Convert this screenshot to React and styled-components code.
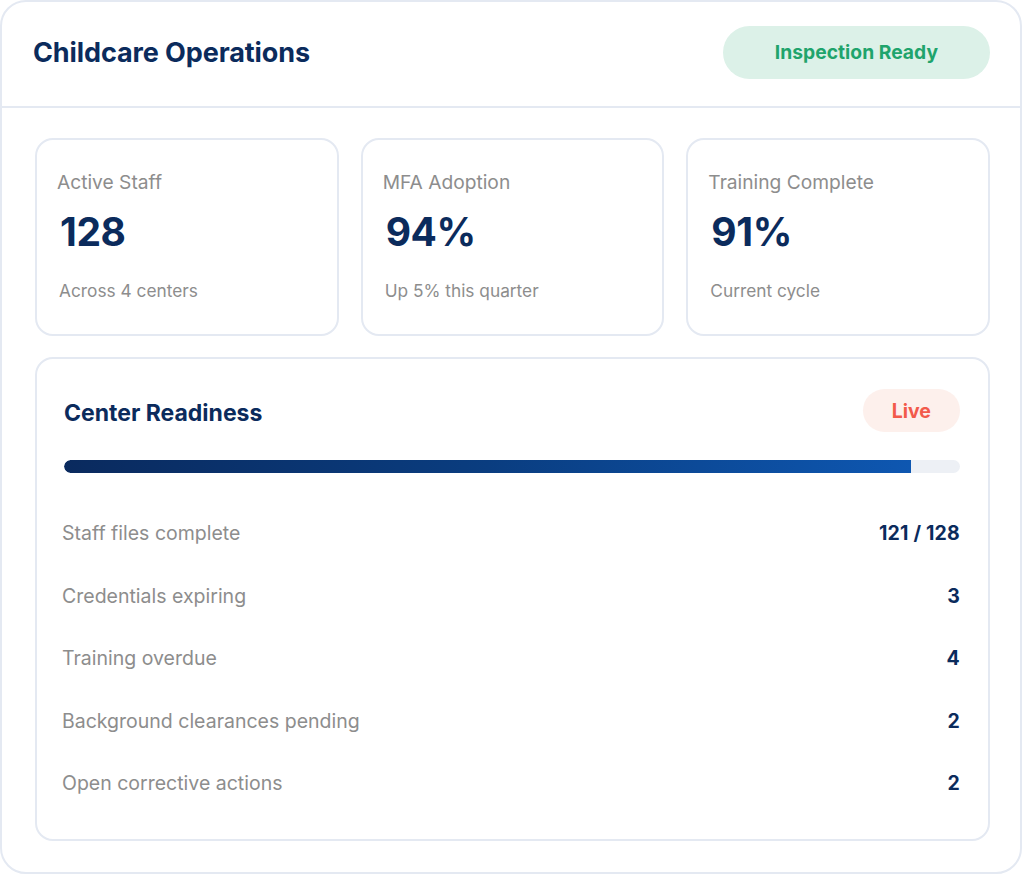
import React from 'react';
import styled, { createGlobalStyle } from 'styled-components';

const GlobalStyle = createGlobalStyle`
  * { box-sizing: border-box; }
  body {
    margin: 0;
    background: #ffffff;
    font-family: Inter, "Noto Sans", "Liberation Sans", sans-serif;
  }
`;

const stats = [
  { label: 'Active Staff', value: '128', note: 'Across 4 centers' },
  { label: 'MFA Adoption', value: '94%', note: 'Up 5% this quarter' },
  { label: 'Training Complete', value: '91%', note: 'Current cycle' },
];

const rows = [
  { label: 'Staff files complete', value: '121 / 128' },
  { label: 'Credentials expiring', value: '3' },
  { label: 'Training overdue', value: '4' },
  { label: 'Background clearances pending', value: '2' },
  { label: 'Open corrective actions', value: '2' },
];

const App = () => {
  return (
    <>
      <GlobalStyle />
      <Card>
        <Header>
          <Title>Childcare Operations</Title>
          <Pill tone="green">Inspection Ready</Pill>
        </Header>
        <Body>
          <StatGrid>
            {stats.map((s) => (
              <StatCard key={s.label}>
                <StatLabel>{s.label}</StatLabel>
                <StatValue>{s.value}</StatValue>
                <StatNote>{s.note}</StatNote>
              </StatCard>
            ))}
          </StatGrid>

          <Panel>
            <PanelHeader>
              <PanelTitle>Center Readiness</PanelTitle>
              <Pill tone="red" small>Live</Pill>
            </PanelHeader>
            <Track>
              <Fill style={{ width: `${(121 / 128) * 100}%` }} />
            </Track>
            <RowList>
              {rows.map((r) => (
                <Row key={r.label}>
                  <RowLabel>{r.label}</RowLabel>
                  <RowValue>{r.value}</RowValue>
                </Row>
              ))}
            </RowList>
          </Panel>
        </Body>
      </Card>
    </>
  );
};

const Card = styled.div`
  width: 1022px;
  height: 874px;
  border: 2px solid #e4e9f2;
  border-radius: 26px;
  background: #fff;
  overflow: hidden;
`;

const Header = styled.div`
  height: 106px;
  display: flex;
  align-items: center;
  justify-content: space-between;
  padding: 0 30px 4px 31px;
  border-bottom: 2px solid #e4e9f2;
`;

const Title = styled.h1`
  margin: 0;
  font-size: 27px;
  font-weight: 700;
  color: #0b2b5c;
  letter-spacing: -0.1px;
`;

const Pill = styled.span`
  display: inline-flex;
  align-items: center;
  justify-content: center;
  height: ${(p) => (p.small ? '43px' : '53px')};
  padding: ${(p) => (p.small ? '0 29px' : '0 52px')};
  border-radius: 30px;
  font-size: ${(p) => (p.small ? '19.5px' : '19.3px')};
  font-weight: 700;
  background: ${(p) => (p.tone === 'green' ? '#dcf1e8' : '#fdf0ec')};
  color: ${(p) => (p.tone === 'green' ? '#1fa46c' : '#f25a4b')};
`;

const Body = styled.div`
  padding: 30px 30px 0 33px;
`;

const StatGrid = styled.div`
  display: grid;
  grid-template-columns: repeat(3, 1fr);
  gap: 22px;
`;

const StatCard = styled.div`
  height: 198px;
  border: 2px solid #e4e9f2;
  border-radius: 18px;
  padding: 30px 20px 0 20px;
  display: flex;
  flex-direction: column;
`;

const StatLabel = styled.div`
  font-size: 19.2px;
  line-height: 24px;
  color: #8d8d8d;
`;

const StatValue = styled.div`
  margin-top: 15px;
  font-size: 39px;
  line-height: 46px;
  font-weight: 700;
  color: #0b2b5c;
  padding-left: 3px;
  letter-spacing: -0.4px;
`;

const StatNote = styled.div`
  margin-top: 25px;
  font-size: 17.3px;
  line-height: 22px;
  color: #8d8d8d;
  padding-left: 2px;
`;

const Panel = styled.div`
  margin-top: 21px;
  height: 484px;
  border: 2px solid #e4e9f2;
  border-radius: 18px;
  padding: 30px 28px 0 25px;
`;

const PanelHeader = styled.div`
  display: flex;
  align-items: center;
  justify-content: space-between;
`;

const PanelTitle = styled.h2`
  margin: 4px 0 0 2px;
  font-size: 23px;
  font-weight: 700;
  color: #0b2b5c;
`;

const Track = styled.div`
  margin-top: 28px;
  margin-left: 2px;
  height: 13px;
  border-radius: 7px;
  background: #edf0f5;
  overflow: hidden;
`;

const Fill = styled.div`
  height: 100%;
  border-radius: 7px 0 0 7px;
  background: linear-gradient(90deg, #0a2a5e 0%, #0a3d80 50%, #0e57b1 100%);
`;

const RowList = styled.div`
  margin-top: 29px;
  display: flex;
  flex-direction: column;
`;

const Row = styled.div`
  height: 62.5px;
  display: flex;
  align-items: center;
  justify-content: space-between;
`;

const RowLabel = styled.span`
  font-size: 19.5px;
  color: #8d8d8d;
`;

const RowValue = styled.span`
  font-size: 19.5px;
  font-weight: 700;
  color: #0b2b5c;
  letter-spacing: 0.2px;
`;

export default App;
